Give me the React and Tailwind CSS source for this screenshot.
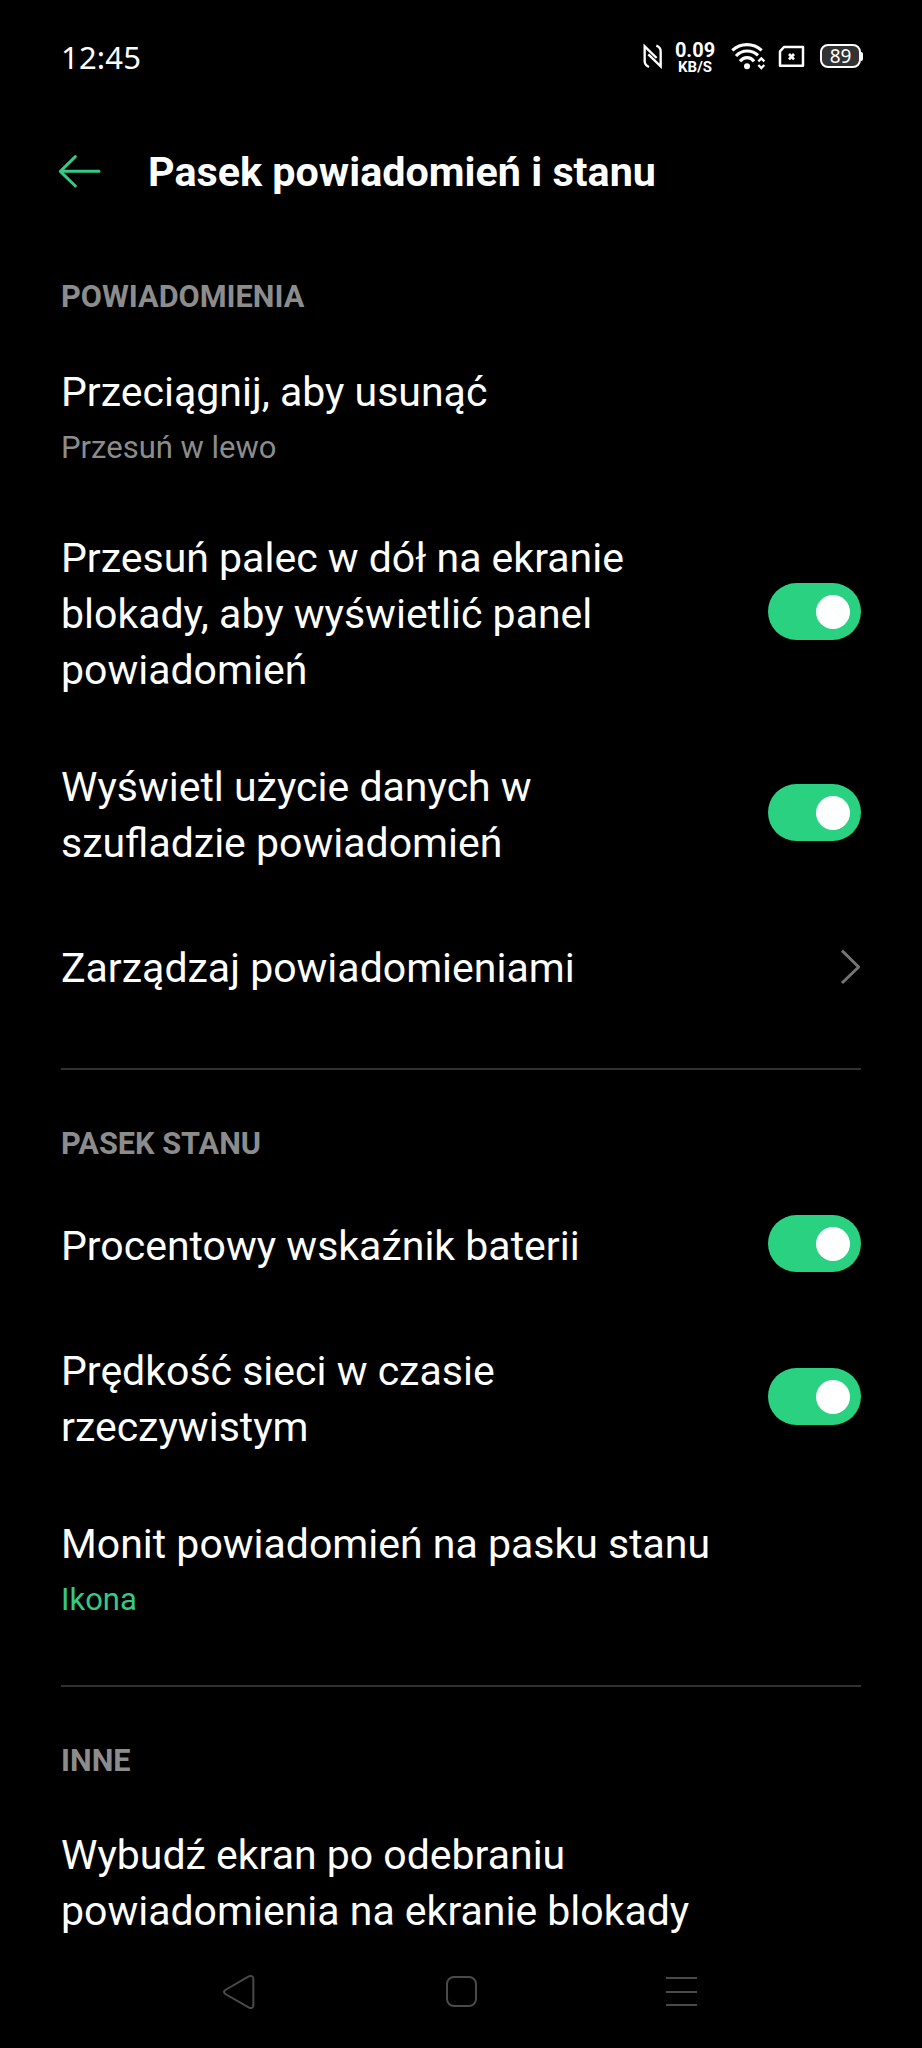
import { useState } from "react";

const NfcIcon = () => (
  <svg viewBox="60 51 63 78" className="w-[21px] h-[26px]" fill="none" stroke="#fff" strokeWidth="7">
    <path d="M81 123 Q68 118 68 106 V61 L104 96" />
    <path d="M103 59 Q116 64 116 76 V121 L79 85" />
  </svg>
);

const WifiIcon = () => (
  <svg viewBox="324 45 111 90" className="w-[37px] h-[30px]" fill="none" stroke="#fff" strokeWidth="9.5">
    <path d="M331 73 Q350 56 375 56 Q400 56 419 73" />
    <path d="M342 90 Q356 75 375 75 Q395 75 408 88" />
    <path d="M354 106 Q363 95 375 95 Q388 95 396 106" />
    <circle cx="375" cy="121" r="9" fill="#fff" stroke="none" />
    <path d="M409 106 L418 97 L427 106 M409 117 L418 126 L427 117" strokeWidth="7" />
  </svg>
);

const SimIcon = () => (
  <svg viewBox="468 57 81 69" className="w-[27px] h-[23px]" fill="none" stroke="#fff" strokeWidth="7.5">
    <path d="M486 63 H543 V119 H474 V76 Z" strokeLinejoin="round" />
    <path d="M501 84 L516 100 M516 84 L501 100" strokeWidth="8" />
  </svg>
);

const Battery = ({ level }) => (
  <div className="flex items-center">
    <div className="w-[41px] h-[24px] rounded-[8px] border-[2.5px] border-white bg-[#333] flex items-center justify-center font-['Noto_Sans',sans-serif] text-[19px] leading-none text-white">
      {level}
    </div>
    <div className="w-[2px] h-[9px] rounded-r-full bg-white" />
  </div>
);

const StatusBar = () => (
  <div className="h-[112px] pl-[61px] pr-[59px] flex items-center justify-between">
    <span className="font-['Noto_Sans',sans-serif] text-[31px] leading-[40px] mt-[2px] tracking-[0.2px]">
      12:45
    </span>
    <div className="flex items-center">
      <NfcIcon />
      <div className="ml-[10px] mt-[3px] w-[44px] text-center font-bold">
        <p className="text-[20px] leading-[18px]">0.09</p>
        <p className="text-[15px] leading-[16px]">KB/S</p>
      </div>
      <div className="ml-[13px]">
        <WifiIcon />
      </div>
      <div className="ml-[11px]">
        <SimIcon />
      </div>
      <div className="ml-[15px]">
        <Battery level={89} />
      </div>
    </div>
  </div>
);

const SectionTitle = ({ children }) => (
  <h2 className="text-[30.7px] leading-[40px] font-bold text-[#8c8c8c]">
    {children}
  </h2>
);

const Toggle = ({ defaultOn = true }) => {
  const [on, setOn] = useState(defaultOn);
  return (
    <button
      role="switch"
      aria-checked={on}
      onClick={() => setOn(!on)}
      className={`w-[93px] h-[57px] mb-[5px] px-[11px] shrink-0 rounded-full flex items-center transition-colors ${
        on ? "bg-[#2ad181] justify-end" : "bg-[#3a3a3a] justify-start"
      }`}
    >
      <span className="size-[34px] rounded-full bg-white" />
    </button>
  );
};

const Row = ({ title, sub, subClass = "text-[#8c8c8c]", action, className }) => (
  <div className={`flex items-center justify-between ${className}`}>
    <div className={action ? "max-w-[600px]" : "max-w-[720px]"}>
      <p className="text-[41px] leading-[56.3px] whitespace-pre-line">{title}</p>
      {sub && (
        <p className={`mt-2 text-[31px] leading-[40px] ${subClass}`}>{sub}</p>
      )}
    </div>
    {action}
  </div>
);

const Chevron = () => (
  <svg viewBox="300 84 63 114" className="w-[21px] h-[38px] mb-[2px]" fill="none" stroke="#747474" strokeWidth="9">
    <path d="M306 92 L356 141 L306 189" strokeLinejoin="round" />
  </svg>
);

const NavBar = () => (
  <div className="h-[82px] mt-[11px] flex items-center justify-between pl-[221px] pr-[225px]">
    <svg viewBox="63 69 105 114" className="w-[35px] h-[38px]" fill="none" stroke="#4a4a4a" strokeWidth="6">
      <path d="M76 120 L146 79 Q160 74 160 88 V164 Q160 178 147 173 L76 132 Q68 126 76 120 Z" />
    </svg>
    <div className="size-[31px] rounded-[8px] border-2 border-[#4a4a4a]" />
    <div className="w-[31px] h-[29px] flex flex-col justify-between">
      <div className="h-[2px] bg-[#4a4a4a]" />
      <div className="h-[2px] bg-[#4a4a4a]" />
      <div className="h-[2px] bg-[#4a4a4a]" />
    </div>
  </div>
);

export default function App() {
  return (
    <div className="w-[922px] h-[2048px] overflow-hidden bg-black text-white font-[Roboto,sans-serif]">
      <StatusBar />

      {/* Header */}
      <header className="h-[120px] pl-[57px] flex items-center">
        <svg viewBox="51 372 135 105" className="w-[45px] h-[35px] mb-px" fill="none" stroke="#35c984" strokeWidth="9">
          <path d="M106 380 L61 424 L106 468 M61 424 H177" strokeLinecap="round" strokeLinejoin="round" />
        </svg>
        <h1 className="ml-[46px] text-[41.3px] leading-[56px] font-bold">
          Pasek powiadomień i stanu
        </h1>
      </header>

      <main className="px-[61px] pt-[45px]">
        <section className="h-[793px] border-b-2 border-[#303030]">
          <SectionTitle>POWIADOMIENIA</SectionTitle>
          <Row className="mt-[47px]" title="Przeciągnij, aby usunąć" sub="Przesuń w lewo" />
          <Row
            className="mt-[61.5px]"
            title="Przesuń palec w dół na ekranie blokady, aby wyświetlić panel powiadomień"
            action={<Toggle />}
          />
          <Row
            className="mt-[60.5px]"
            title={"Wyświetl użycie danych w\nszufladzie powiadomień"}
            action={<Toggle />}
          />
          <Row className="mt-[68px]" title="Zarządzaj powiadomieniami" action={<Chevron />} />
        </section>

        <section className="h-[617px] pt-[54px] border-b-2 border-[#303030]">
          <SectionTitle>PASEK STANU</SectionTitle>
          <Row className="mt-[51px]" title="Procentowy wskaźnik baterii" action={<Toggle />} />
          <Row
            className="mt-[66px]"
            title={"Prędkość sieci w czasie\nrzeczywistym"}
            action={<Toggle />}
          />
          <Row
            className="mt-[60px]"
            title="Monit powiadomień na pasku stanu"
            sub="Ikona"
            subClass="text-[#35c984]"
          />
        </section>

        <section className="pt-[54px]">
          <SectionTitle>INNE</SectionTitle>
          <Row
            className="mt-[46px]"
            title="Wybudź ekran po odebraniu powiadomienia na ekranie blokady"
          />
        </section>
      </main>

      <NavBar />
    </div>
  );
}
